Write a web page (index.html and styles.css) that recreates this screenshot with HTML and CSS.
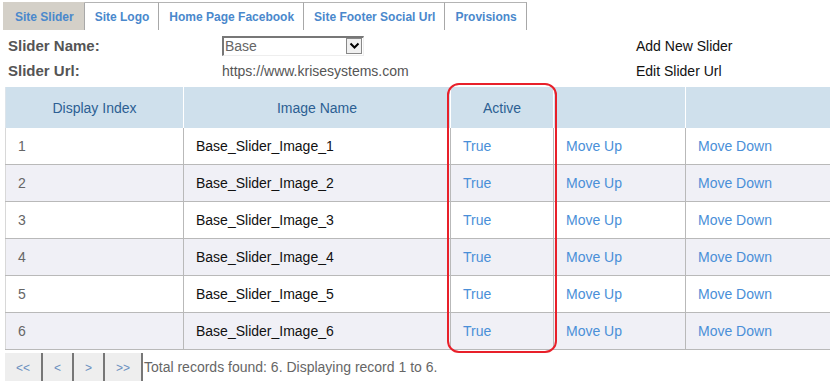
FILE: index.html
```html
<!DOCTYPE html>
<html lang="en">
  <head>
    <meta charset="UTF-8" />
    <title>Slider settings</title>
    <link rel="stylesheet" href="styles.css">
  </head>
  <body>
    <div class="page">
      <ul class="tabs">
        <li class="tab active">Site Slider</li>
        <li class="tab">Site Logo</li>
        <li class="tab">Home Page Facebook</li>
        <li class="tab">Site Footer Social Url</li>
        <li class="tab">Provisions</li>
      </ul>

      <div class="slider-form">
        <div class="label">Slider Name:</div>
        <div class="field">
          <div class="select-box">
            <span class="select-value">Base</span>
            <span class="select-arrow">
              <svg width="11" height="8" viewBox="0 0 11 8"><path d="M1.5 1.5 L5.5 5.5 L9.5 1.5" fill="none" stroke="#000" stroke-width="2"/></svg>
            </span>
          </div>
        </div>
        <div class="action">Add New Slider</div>

        <div class="label">Slider Url:</div>
        <div class="field url">https://www.krisesystems.com</div>
        <div class="action">Edit Slider Url</div>
      </div>

      <div class="grid-wrap">
        <table class="grid">
          <thead>
            <tr>
              <th class="c1">Display Index</th>
              <th class="c2">Image Name</th>
              <th class="c3">Active</th>
              <th class="c4"></th>
              <th class="c5"></th>
            </tr>
          </thead>
          <tbody>
            <tr><td class="idx">1</td><td>Base_Slider_Image_1</td><td class="lnk">True</td><td class="lnk">Move Up</td><td class="lnk">Move Down</td></tr>
            <tr class="alt"><td class="idx">2</td><td>Base_Slider_Image_2</td><td class="lnk">True</td><td class="lnk">Move Up</td><td class="lnk">Move Down</td></tr>
            <tr><td class="idx">3</td><td>Base_Slider_Image_3</td><td class="lnk">True</td><td class="lnk">Move Up</td><td class="lnk">Move Down</td></tr>
            <tr class="alt"><td class="idx">4</td><td>Base_Slider_Image_4</td><td class="lnk">True</td><td class="lnk">Move Up</td><td class="lnk">Move Down</td></tr>
            <tr><td class="idx">5</td><td>Base_Slider_Image_5</td><td class="lnk">True</td><td class="lnk">Move Up</td><td class="lnk">Move Down</td></tr>
            <tr class="alt"><td class="idx">6</td><td>Base_Slider_Image_6</td><td class="lnk">True</td><td class="lnk">Move Up</td><td class="lnk">Move Down</td></tr>
          </tbody>
        </table>
        <div class="highlight"></div>
      </div>

      <div class="pager">
        <span class="pg-btn first">&lt;&lt;</span>
        <span class="pg-btn">&lt;</span>
        <span class="pg-btn">&gt;</span>
        <span class="pg-btn last">&gt;&gt;</span>
        <span class="pg-info">Total records found: 6. Displaying record 1 to 6.</span>
      </div>
    </div>
  </body>
</html>
```

FILE: styles.css
```css
body {
  margin: 0;
  background-color: white;
  font-family: "Liberation Sans", Arial, sans-serif;
  font-size: 14px;
}

.page {
  padding: 2px 0 0 5px;
}

.tabs {
  display: flex;
  list-style: none;
  margin: 0 0 0 -2px;
  padding: 0;
}

.tab {
  height: 28px;
  line-height: 29px;
  padding: 0 9px 0 10px;
  border-top: 1px solid #b4b4b4;
  border-right: 1px solid #a8a8a8;
  box-sizing: border-box;
  font-size: 12px;
  font-weight: bold;
  color: #4a88cc;
}

.tab.active {
  background-color: #d4d0c8;
  border-top-color: #d4d0c8;
  padding: 0 10px 0 12px;
}

.slider-form {
  display: grid;
  grid-template-columns: 214px 414px 1fr;
  grid-auto-rows: 25px;
  align-items: center;
  padding: 3px 0 0 3px;
  height: 57px;
  box-sizing: border-box;
}

.label {
  font-size: 15px;
  font-weight: bold;
  color: #555;
}

.field {
  color: #555;
}

.select-box {
  display: flex;
  align-items: center;
  width: 142px;
  height: 20px;
  box-sizing: border-box;
  border: 1px solid #777;
  border-left-width: 2px;
  border-top-width: 2px;
  border-bottom-color: #eee;
  border-right-color: #eee;
  background-color: white;
}

.select-value {
  flex: 1;
  padding-left: 1px;
  font-size: 14px;
  color: #666;
}

.select-arrow {
  display: flex;
  align-items: center;
  justify-content: center;
  width: 16px;
  height: 16px;
  border: 1px solid #888;
  box-sizing: border-box;
  background-color: #f0f0f0;
  margin-right: 1px;
}

.action {
  color: #111;
}

.grid-wrap {
  position: relative;
}

.grid {
  border-collapse: collapse;
  width: 825px;
  table-layout: fixed;
}

.grid th {
  height: 41px;
  padding: 0;
  background-color: #cfe0ec;
  color: #2c5f93;
  font-weight: normal;
  font-size: 14px;
  border-left: 1px solid white;
}

.grid th.c1 {
  border-left: 1px solid #dde4ea;
}

.c1 { width: 177px; }
.c2 { width: 266px; }
.c3 { width: 102px; }
.c4 { width: 131px; }
.c5 { width: 149px; }

.grid td {
  height: 36px;
  padding: 0 0 0 12px;
  border: 1px solid #b9b9b9;
  border-top: none;
  color: #111;
}

.grid td:first-child {
  border-left-color: #d8d8d8;
}

.grid tr.alt td {
  background-color: #f0f0f6;
}

.grid td.idx {
  color: #666;
}

.grid td.lnk {
  color: #4a8fd8;
}

.highlight {
  position: absolute;
  left: 442px;
  top: -4px;
  width: 110px;
  height: 270px;
  border: 2px solid #e8202a;
  border-radius: 12px;
  box-sizing: border-box;
}

.pager {
  display: flex;
  align-items: center;
  margin-top: 3px;
  height: 28px;
}

.pg-btn {
  height: 28px;
  line-height: 30px;
  width: 29px;
  text-align: center;
  background-color: #eeeeee;
  border-right: 2px solid #777;
  color: #6b8fc0;
  font-size: 12px;
}

.pg-btn.first {
  width: 36px;
}

.pg-btn.last {
  width: 36px;
}

.pg-info {
  padding-left: 1px;
  color: #666;
}
```
